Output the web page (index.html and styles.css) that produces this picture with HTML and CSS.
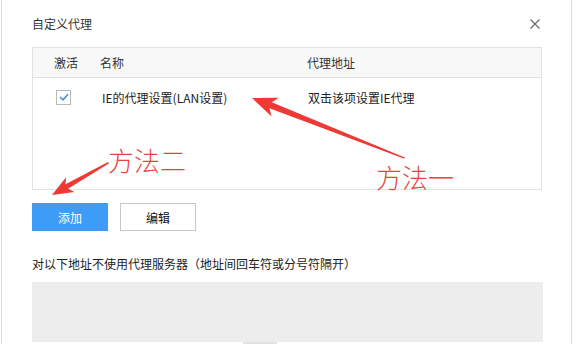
FILE: index.html
```html
<!DOCTYPE html>
<html lang="zh-CN">
  <head>
    <meta charset="UTF-8" />
    <title>自定义代理</title>
    <link rel="stylesheet" href="styles.css">
  </head>
  <body>
    <div class="dialog">
      <div class="dialog-head">
        <span class="dialog-title">自定义代理</span>
        <svg class="close" width="10" height="10" viewBox="0 0 10 10">
          <path d="M0.5 0.5 L9.5 9.5 M9.5 0.5 L0.5 9.5" stroke="#666" stroke-width="1.1" fill="none" />
        </svg>
      </div>

      <div class="proxy-table">
        <div class="row head-row">
          <div class="col-active">激活</div>
          <div class="col-name">名称</div>
          <div class="col-addr">代理地址</div>
        </div>
        <div class="table-body">
          <div class="row item-row">
            <div class="col-active">
              <span class="checkbox">
                <svg width="10" height="8" viewBox="0 0 10 8">
                  <path d="M1 4 L4 6.8 L9 1.2" stroke="#3b8ee6" stroke-width="1.6" fill="none" />
                </svg>
              </span>
            </div>
            <div class="col-name">IE的代理设置(LAN设置)</div>
            <div class="col-addr">双击该项设置IE代理</div>
          </div>
        </div>
      </div>

      <div class="buttons">
        <button class="btn btn-primary">添加</button>
        <button class="btn">编辑</button>
      </div>

      <div class="bypass-label">对以下地址不使用代理服务器（地址间回车符或分号符隔开）</div>
      <div class="bypass-box"></div>
      <div class="mark"></div>
    </div>

    <!-- red notes drawn over the screenshot -->
    <svg class="notes" width="579" height="344" viewBox="0 0 579 344">
      <polygon fill="#ee3a34" transform="translate(252,98) rotate(21.5)"
        points="0,0 25,-10 20,-3.2 164,-0.6 164,0.6 20,3.2 25,10" />
      <polygon fill="#ee3a34" transform="translate(52,195) rotate(-29.7)"
        points="0,0 21,-8.5 17,-2.6 65,-0.8 65,0.8 17,2.6 21,8.5" />
    </svg>
    <span class="note note-two">方法二</span>
    <span class="note note-one">方法一</span>
  </body>
</html>
```

FILE: styles.css
```css
body {
  margin: 0;
  background: #fff;
  font-family: "Noto Sans CJK SC", "Liberation Sans", sans-serif;
  font-size: 12px;
  color: #222;
}

.dialog {
  margin-left: 1px;
  width: 510px;
  height: 344px;
  padding: 0 29px 0 30px;
  border-left: 1px solid #dcdcdc;
  border-right: 1px solid #dcdcdc;
  overflow: hidden;
}

.dialog-head {
  height: 47px;
  display: flex;
  align-items: center;
  justify-content: space-between;
}
.dialog-title {
  color: #333;
  line-height: 16px;
}
.close {
  margin-right: 2px;
}

.proxy-table {
  border: 1px solid #e2e2e2;
}
.row {
  display: flex;
  align-items: center;
}
.head-row {
  height: 29px;
  background: #f8f8f8;
  border-bottom: 1px solid #e2e2e2;
  color: #333;
}
.col-active {
  width: 46px;
  padding-left: 21px;
}
.col-name {
  width: 207px;
}
.col-addr {
  flex: 1;
}
.table-body {
  height: 111px;
}
.item-row {
  height: 38px;
}
.item-row .col-active {
  width: 44px;
  padding-left: 23px;
}
.item-row .col-name {
  padding-left: 2px;
  width: 206px;
}
.checkbox {
  display: flex;
  align-items: center;
  justify-content: center;
  width: 13px;
  height: 13px;
  border: 1px solid #b8b8b8;
  background: #fff;
}

.buttons {
  display: flex;
  gap: 12px;
  margin-top: 13px;
}
.btn {
  width: 76px;
  height: 28px;
  border: 1px solid #c6c6c6;
  background: #fff;
  color: #111;
  font-family: inherit;
  font-size: 12px;
  padding: 0;
}
.btn-primary {
  background: #3c9cf6;
  border-color: #3c9cf6;
  color: #fff;
}

.bypass-label {
  margin-top: 25px;
  line-height: 16px;
  color: #222;
}
.bypass-box {
  margin-top: 10px;
  width: 511px;
  height: 60px;
  background: #ededed;
}
.mark {
  margin-left: 211px;
  width: 34px;
  height: 6px;
  background: #e2e2e2;
}

.notes {
  position: absolute;
  top: 0;
  left: 0;
  pointer-events: none;
}
.note {
  position: absolute;
  font-size: 26px;
  line-height: 26px;
  font-weight: 300;
  color: #e8443e;
}
.note-two {
  left: 108px;
  top: 147px;
}
.note-one {
  left: 376px;
  top: 164px;
}
```
